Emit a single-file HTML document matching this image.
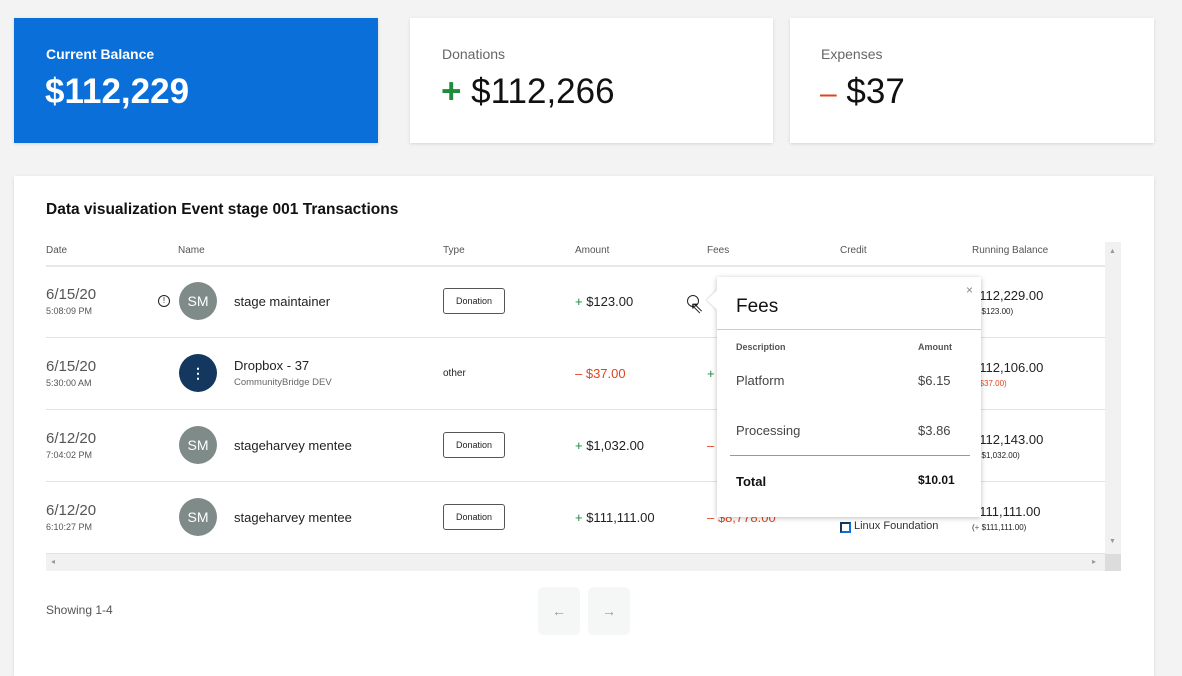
<!DOCTYPE html>
<html><head><style>
*{box-sizing:border-box;margin:0;padding:0}
body{width:1182px;height:655px;background:#f2f3f2;font-family:"Liberation Sans",sans-serif;color:#222;position:relative;overflow:hidden}
.a{position:absolute}
.card{position:absolute;background:#fff;box-shadow:0 1px 3px rgba(0,0,0,.12)}
.lbl{font-size:14px;color:#666}
.big{font-size:35px;color:#111}
.hd{font-size:10px;color:#555;top:245px}
.row{position:absolute;left:46px;width:1059px;height:72px;border-bottom:1px solid #e2e2e2}
.d1{position:absolute;left:0;top:20px;font-size:15px;color:#555}
.d2{position:absolute;left:0;top:40px;font-size:9px;color:#555}
.av{position:absolute;left:133px;top:16px;width:38px;height:38px;border-radius:50%;background:#7f8b88;color:#fff;font-size:14px;text-align:center;line-height:38px}
.nm{position:absolute;left:188px;top:28px;font-size:13px;color:#222}
.tag{position:absolute;left:397px;top:22px;width:62px;height:26px;border:1px solid #555;border-radius:3px;font-size:9px;text-align:center;line-height:24px}
.amt{position:absolute;left:529px;top:28px;font-size:13px}
.g{color:#1e8c3a}.r{color:#e0441f}
.rb{position:absolute;left:926px;top:22px;font-size:13px}
.rb2{position:absolute;left:926px;top:41px;font-size:8px}
</style></head><body>
<div class="card" style="left:14px;top:18px;width:364px;height:125px;background:#0b6fd9">
<div class="a" style="left:32px;top:28px;font-size:14px;color:#fff;font-weight:bold">Current Balance</div>
<div class="a" style="left:31px;top:54px;font-size:35px;color:#fff;font-weight:bold">$112,229</div></div>
<div class="card" style="left:410px;top:18px;width:363px;height:125px">
<div class="a lbl" style="left:32px;top:28px">Donations</div>
<div class="a big" style="left:31px;top:54px"><span class="g" style="font-weight:bold">+</span> $112,266</div></div>
<div class="card" style="left:790px;top:18px;width:364px;height:125px">
<div class="a lbl" style="left:31px;top:28px">Expenses</div>
<div class="a big" style="left:30px;top:54px"><span class="r" style="font-size:30px">–</span> $37</div></div>

<div class="card" style="left:14px;top:176px;width:1140px;height:500px"></div>
<div class="a" style="left:46px;top:201px;font-size:15.5px;font-weight:bold;color:#111">Data visualization Event stage 001 Transactions</div>
<div class="a hd" style="left:46px">Date</div><div class="a hd" style="left:178px">Name</div><div class="a hd" style="left:443px">Type</div><div class="a hd" style="left:575px">Amount</div><div class="a hd" style="left:707px">Fees</div><div class="a hd" style="left:840px">Credit</div><div class="a hd" style="left:972px">Running Balance</div>
<div class="a" style="left:46px;top:265px;width:1059px;height:2px;background:#e8e8e8"></div>

<div class="row" style="top:266px"><div class="d1">6/15/20</div><div class="d2">5:08:09 PM</div>
<div class="a" style="left:112px;top:29px;width:12px;height:12px;border:1px solid #222;border-radius:50%;font-size:8px;text-align:center;line-height:10px">!</div>
<div class="av">SM</div><div class="nm">stage maintainer</div><div class="tag">Donation</div><div class="amt"><span class="g">+</span> $123.00</div>
<div class="a" style="left:641px;top:29px;width:12px;height:12px;border:1px solid #222;border-radius:50%"></div>
<div class="rb">$112,229.00</div><div class="rb2">(+ $123.00)</div></div>
<div class="row" style="top:338px"><div class="d1">6/15/20</div><div class="d2">5:30:00 AM</div>
<div class="av" style="background:#13375f;font-weight:bold">⋮</div><div class="nm" style="top:20px">Dropbox - 37</div><div class="a" style="left:188px;top:39px;font-size:9.5px;color:#666">CommunityBridge DEV</div>
<div class="a" style="left:397px;top:30px;font-size:10px">other</div><div class="amt r">– $37.00</div><div class="a g" style="left:661px;top:28px;font-size:13px">+</div>
<div class="rb">$112,106.00</div><div class="rb2 r">(- $37.00)</div></div>
<div class="row" style="top:410px"><div class="d1">6/12/20</div><div class="d2">7:04:02 PM</div>
<div class="av">SM</div><div class="nm">stageharvey mentee</div><div class="tag">Donation</div><div class="amt"><span class="g">+</span> $1,032.00</div><div class="a r" style="left:661px;top:28px;font-size:13px">–</div>
<div class="rb">$112,143.00</div><div class="rb2">(+ $1,032.00)</div></div>
<div class="row" style="top:482px"><div class="d1">6/12/20</div><div class="d2">6:10:27 PM</div>
<div class="av">SM</div><div class="nm">stageharvey mentee</div><div class="tag">Donation</div><div class="amt"><span class="g">+</span> $111,111.00</div><div class="a r" style="left:661px;top:28px;font-size:13px">– $8,778.00</div>
<div class="a" style="left:794px;top:40px;width:11px;height:11px;border:2px solid #0b6fd9;border-top-color:#13375f;border-left-color:#13375f"></div>
<div class="a" style="left:808px;top:38px;font-size:11px;color:#333">Linux Foundation</div>
<div class="rb">$111,111.00</div><div class="rb2">(<span class="g">+</span> $111,111.00)</div></div>

<div class="a" style="left:1105px;top:242px;width:16px;height:312px;background:#f1f1f1"><div class="a" style="left:4px;top:6px;font-size:7px;color:#999">▲</div><div class="a" style="left:4px;top:296px;font-size:7px;color:#999">▼</div></div>
<div class="a" style="left:46px;top:554px;width:1059px;height:17px;background:#f1f1f1"><div class="a" style="left:5px;top:3px;font-size:8px;color:#999">◂</div><div class="a" style="left:1046px;top:3px;font-size:8px;color:#999">▸</div></div>
<div class="a" style="left:1105px;top:554px;width:16px;height:17px;background:#dcdcdc"></div>

<div class="card" style="left:717px;top:277px;width:264px;height:240px;box-shadow:0 1px 5px rgba(0,0,0,.25)">
<div class="a" style="left:-7px;top:16px;width:14px;height:14px;background:#fff;transform:rotate(45deg);box-shadow:-1px 1px 2px rgba(0,0,0,.12)"></div>
<div class="a" style="left:0;top:0;width:20px;height:50px;background:#fff"></div>
<div class="a" style="left:249px;top:6px;font-size:12px;color:#888">×</div>
<div class="a" style="left:19px;top:19px;font-size:19px;color:#111">Fees</div>
<div class="a" style="left:0;top:52px;width:264px;height:1px;background:#ccc"></div>
<div class="a" style="left:19px;top:65px;font-size:9px;color:#555;font-weight:bold">Description</div><div class="a" style="left:201px;top:65px;font-size:9px;color:#555;font-weight:bold">Amount</div>
<div class="a" style="left:19px;top:96px;font-size:13px;color:#444">Platform</div><div class="a" style="left:201px;top:96px;font-size:13px;color:#444">$6.15</div>
<div class="a" style="left:19px;top:146px;font-size:13px;color:#444">Processing</div><div class="a" style="left:201px;top:146px;font-size:13px;color:#444">$3.86</div>
<div class="a" style="left:13px;top:178px;width:240px;height:1px;background:#999"></div>
<div class="a" style="left:19px;top:197px;font-size:13px;font-weight:bold;color:#111">Total</div><div class="a" style="left:201px;top:196px;font-size:12px;font-weight:bold;color:#111">$10.01</div>
</div>
<div class="a" style="left:690px;top:298px;font-size:16px;color:#111">⇖</div>

<div class="a" style="left:46px;top:603px;font-size:12px;color:#555">Showing 1-4</div>
<div class="a" style="left:538px;top:587px;width:42px;height:48px;background:#f5f6f6;border-radius:6px;text-align:center;line-height:48px;color:#999;font-size:14px">←</div>
<div class="a" style="left:588px;top:587px;width:42px;height:48px;background:#f5f6f6;border-radius:6px;text-align:center;line-height:48px;color:#999;font-size:14px">→</div>
</body></html>
